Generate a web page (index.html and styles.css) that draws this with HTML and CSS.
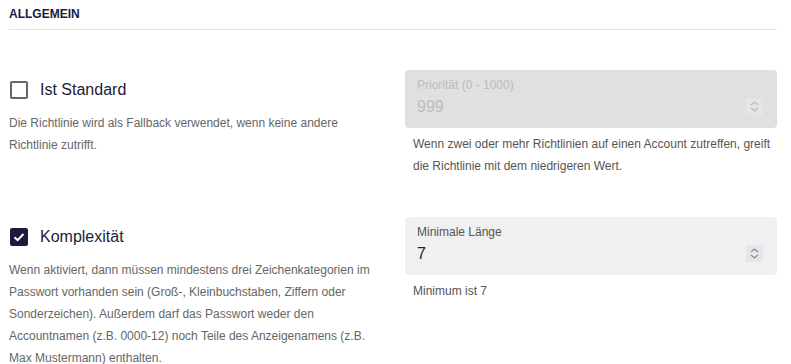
FILE: index.html
```html
<!DOCTYPE html>
<html>
	<head>
		<meta charset="UTF-8">
		<title>Allgemein</title>
		<link rel="stylesheet" href="styles.css">
	</head>
	<body>
		<div id="box">
			<h3 class="title">ALLGEMEIN</h3>
			<div class="rows">
				<!-- Standard -->
				<div class="left">
					<label class="check">
						<span class="tick"></span>
						<span class="name">Ist Standard</span>
					</label>
					<p class="desc">Die Richtlinie wird als Fallback verwendet, wenn keine andere Richtlinie zutrifft.</p>
				</div>
				<div class="right">
					<div class="field disabled">
						<div class="label">Priorität (0 - 1000)</div>
						<div class="value">
							<span>999</span>
							<span class="spin">
								<svg width="17" height="17" viewBox="0 0 17 17"><path d="M5 7 L8.5 4 L12 7 M5 10 L8.5 13 L12 10" fill="none" stroke="currentColor" stroke-width="1.2"/></svg>
							</span>
						</div>
					</div>
					<p class="help">Wenn zwei oder mehr Richtlinien auf einen Account zutreffen, greift die Richtlinie mit dem niedrigeren Wert.</p>
				</div>
				<!-- Komplexitaet -->
				<div class="left">
					<label class="check">
						<span class="tick on">
							<svg width="18" height="18" viewBox="0 0 18 18"><path d="M4.5 9.2 L7.6 12.2 L13.5 6" fill="none" stroke="#fff" stroke-width="2"/></svg>
						</span>
						<span class="name">Komplexität</span>
					</label>
					<p class="desc">Wenn aktiviert, dann müssen mindestens drei Zeichenkategorien im Passwort vorhanden sein (Groß-, Kleinbuchstaben, Ziffern oder Sonderzeichen). Außerdem darf das Passwort weder den Accountnamen (z.B. 0000-12) noch Teile des Anzeigenamens (z.B. Max Mustermann) enthalten.</p>
				</div>
				<div class="right">
					<div class="field">
						<div class="label">Minimale Länge</div>
						<div class="value">
							<span>7</span>
							<span class="spin">
								<svg width="17" height="17" viewBox="0 0 17 17"><path d="M5 7 L8.5 4 L12 7 M5 10 L8.5 13 L12 10" fill="none" stroke="currentColor" stroke-width="1.2"/></svg>
							</span>
						</div>
					</div>
					<p class="help">Minimum ist 7</p>
				</div>
			</div>
		</div>
	</body>
</html>
```
FILE: styles.css
```css
body,h3,p{
	padding: 0;
	margin: 0;
}
body{
	font-family: "Liberation Sans", Arial, sans-serif;
	background-color: #fff;
	color: #1c1b3a;
}
#box{
	width: 768px;
	margin-left: 9px;
}
.title{
	font-size: 12px;
	line-height: 16px;
	font-weight: bold;
	padding: 6px 0 7px;
	border-bottom: 1px solid #e2e2e2;
}
.rows{
	display: grid;
	grid-template-columns: 1fr 1fr;
	column-gap: 24px;
	row-gap: 40px;
	margin-top: 40px;
}
.check{
	display: flex;
	align-items: center;
	height: 40px;
	cursor: pointer;
}
.tick{
	display: inline-block;
	box-sizing: border-box;
	width: 18px;
	height: 18px;
	margin-left: 1px;
	border: 2px solid #666;
	border-radius: 2px;
	position: relative;
}
.tick.on{
	background-color: #1c1b3a;
	border-color: #1c1b3a;
}
.tick svg{
	position: absolute;
	left: -2px;
	top: -2px;
}
.name{
	margin-left: 12px;
	font-size: 16px;
	line-height: 24px;
}
.desc{
	margin-top: 2px;
	font-size: 12px;
	line-height: 22px;
	color: #666;
}
.field{
	height: 58px;
	box-sizing: border-box;
	padding: 7px 14px 0 12px;
	border-radius: 4px;
	background-color: #f0f0f0;
}
.field .label{
	font-size: 12px;
	line-height: 16px;
	color: #555;
}
.field .value{
	display: flex;
	align-items: center;
	justify-content: space-between;
	font-size: 16px;
	line-height: 24px;
	height: 27px;
}
.spin{
	width: 17px;
	height: 17px;
	background-color: #e6e6ec;
	color: #8a8a94;
}
.spin svg{
	display: block;
}
.field.disabled{
	background-color: #e0e0e0;
}
.field.disabled .label,
.field.disabled .value{
	color: #bdbdbd;
}
.field.disabled .spin{
	background-color: #e5e5e5;
	color: #bbb;
}
.help{
	margin-top: 5px;
	padding-left: 8px;
	font-size: 12px;
	line-height: 22px;
	color: #555;
}
```
